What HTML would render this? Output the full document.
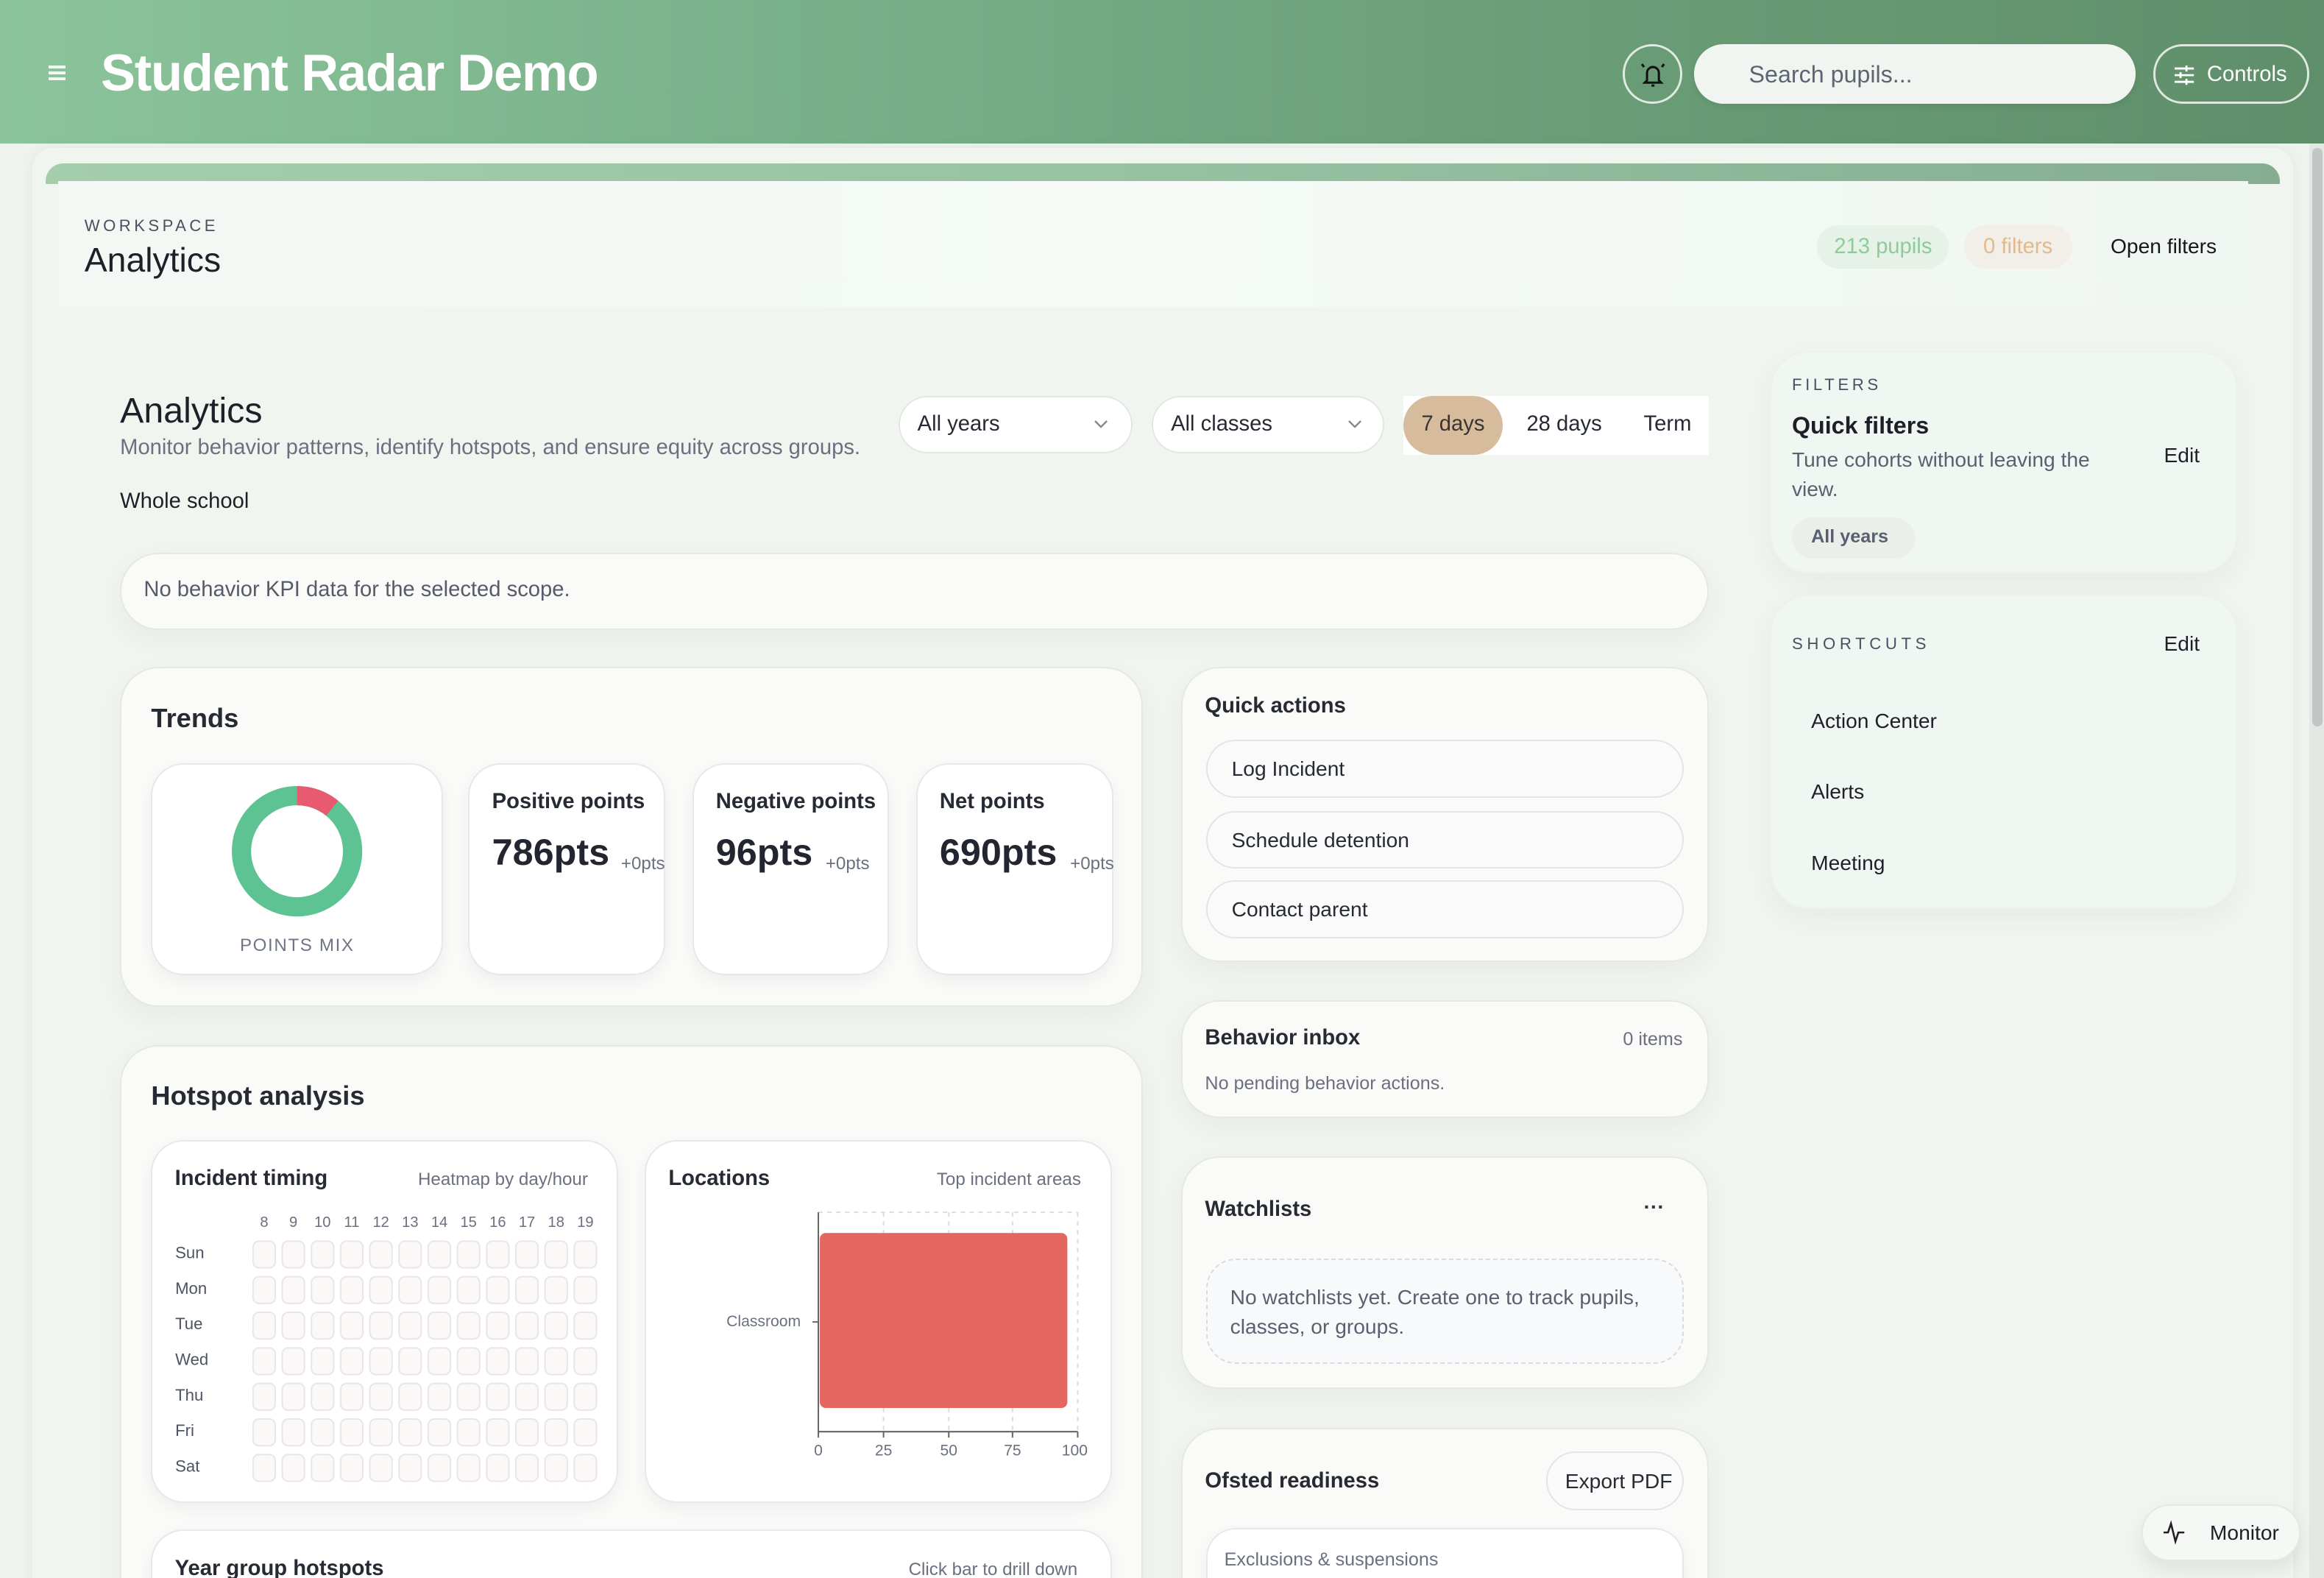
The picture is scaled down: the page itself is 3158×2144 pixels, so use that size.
<!DOCTYPE html>
<html><head><meta charset="utf-8"><style>
*{box-sizing:border-box;margin:0;padding:0}
html,body{width:3158px;height:2144px;overflow:hidden;background:#eef3ee}
#z{zoom:2.01403;width:1568px;height:1065px;position:relative;overflow:hidden;font-family:"Liberation Sans",sans-serif;color:#1f2330;background:linear-gradient(180deg,#eef3ee,#eff3ee)}
.a{position:absolute}
.card{position:absolute;background:#fafaf9;border:1px solid #e6e8e5;border-radius:26px;box-shadow:0 6px 18px rgba(40,60,40,.05)}
.sub{position:absolute;background:#fff;border:1px solid #e7e8e8;border-radius:22px;box-shadow:0 4px 12px rgba(0,0,0,.05)}
.btn{position:absolute;background:#fafafa;border:1px solid #e3e4e4;border-radius:20px;font-size:14px;padding-left:16px;line-height:37px;color:#262a33}
.t18{font-size:18px;font-weight:bold;color:#262a33}
.t14b{font-size:14.5px;font-weight:bold;color:#262a33}
.g{color:#6b7080}
</style></head><body><div id="z">
<div class="a" style="left:0;top:0;width:1568px;height:97px;background:linear-gradient(90deg,#8bc49a 0%,#78b189 35%,#6b9f78 65%,#5f8f6a 100%)"></div>
<div class="a" style="left:33px;top:44px;width:11px;height:2px;background:#fff;box-shadow:0 4px 0 #fff,0 8px 0 #fff;opacity:.9"></div>
<div class="a" style="left:68px;top:29px;font-size:35px;font-weight:bold;color:#fff;letter-spacing:-.6px">Student Radar Demo</div>
<div class="a" style="left:1095px;top:30px;width:40px;height:40px;border:1.5px solid rgba(255,255,255,.8);border-radius:50%"></div>
<svg class="a" style="left:1105px;top:40px" width="20" height="20" viewBox="0 0 20 20" fill="none" stroke="#111" stroke-width="1.5"><path d="M6 14V9a4 4 0 0 1 8 0v5l1.5 1.5h-11z"/><path d="M9 17.5h2"/><path d="M4 5l-1.5-2M16 5l1.5-2"/></svg>
<div class="a" style="left:1143px;top:30px;width:298px;height:40px;background:#f1f5f1;border-radius:20px;box-shadow:0 2px 4px rgba(0,0,0,.08)"></div>
<div class="a" style="left:1180px;top:41px;font-size:16px;color:#5e6472">Search pupils...</div>
<div class="a" style="left:1453px;top:30px;width:105px;height:40px;border:1.5px solid rgba(255,255,255,.8);border-radius:20px"></div>
<svg class="a" style="left:1466px;top:43px" width="15" height="15" viewBox="0 0 15 15" stroke="#fff" stroke-width="1.4"><path d="M1 3h13M1 7.5h13M1 12h13"/><path d="M9 1v4M5 5.5v4M9 10v4"/></svg>
<div class="a" style="left:1489px;top:42px;font-size:14.5px;color:#fff">Controls</div>
<div class="a" style="left:22px;top:100px;width:1525px;height:980px;background:#f1f5f0;border-radius:14px;box-shadow:0 0 10px rgba(0,0,0,.05)"></div>
<div class="a" style="left:31px;top:110px;width:1507px;height:14px;background:linear-gradient(90deg,#a4cdab,#97c2a2,#86ad90);border-radius:12px 12px 0 0"></div>
<div class="a" style="left:39px;top:122px;width:1478px;height:85px;background:linear-gradient(90deg,#f3f8f4,#f5faf6,#f0f6f1)"></div>
<div class="a" style="left:57px;top:146px;font-size:11px;letter-spacing:2.2px;color:#4a5060">WORKSPACE</div>
<div class="a" style="left:57px;top:162px;font-size:23px;color:#1d2029">Analytics</div>
<div class="a" style="left:1226px;top:152px;width:89px;height:29px;background:#e6f2e7;border-radius:15px;color:#8fcb9a;font-size:14.5px;line-height:29px;text-align:center">213 pupils</div>
<div class="a" style="left:1325px;top:152px;width:73px;height:29px;background:#f2efe8;border-radius:15px;color:#e2b98a;font-size:14.5px;line-height:29px;text-align:center">0 filters</div>
<div class="a" style="left:1424px;top:158px;font-size:14px;color:#15171c">Open filters</div>
<div class="a" style="left:81px;top:263px;font-size:24px;color:#1d2029">Analytics</div>
<div class="a g" style="left:81px;top:294px;font-size:14.5px">Monitor behavior patterns, identify hotspots, and ensure equity across groups.</div>
<div class="a" style="left:81px;top:330px;font-size:14.5px;color:#1d2029">Whole school</div>
<div class="a" style="left:606px;top:267px;width:158px;height:39px;background:#fff;border:1px solid #e4e6e4;border-radius:20px"></div>
<div class="a" style="left:619px;top:278px;font-size:14.5px;color:#262a33">All years</div>
<svg class="a" style="left:738px;top:282px" width="10" height="8" viewBox="0 0 10 8" fill="none" stroke="#888" stroke-width="1.2"><path d="M1 2l4 4 4-4"/></svg>
<div class="a" style="left:777px;top:267px;width:157px;height:39px;background:#fff;border:1px solid #e4e6e4;border-radius:20px"></div>
<div class="a" style="left:790px;top:278px;font-size:14.5px;color:#262a33">All classes</div>
<svg class="a" style="left:909px;top:282px" width="10" height="8" viewBox="0 0 10 8" fill="none" stroke="#888" stroke-width="1.2"><path d="M1 2l4 4 4-4"/></svg>
<div class="a" style="left:947px;top:267px;width:206px;height:40px;background:#fff"></div>
<div class="a" style="left:947px;top:267px;width:67px;height:40px;background:#d6bc9c;border-radius:20px"></div>
<div class="a" style="left:959px;top:278px;font-size:14.5px;color:#3a3530">7 days</div>
<div class="a" style="left:1030px;top:278px;font-size:14.5px;color:#262a33">28 days</div>
<div class="a" style="left:1109px;top:278px;font-size:14.5px;color:#262a33">Term</div>
<div class="card" style="left:81px;top:373px;width:1072px;height:52px;border-radius:26px"></div>
<div class="a g" style="left:97px;top:390px;font-size:14.5px;color:#555b68">No behavior KPI data for the selected scope.</div>
<div class="card" style="left:81px;top:450px;width:690px;height:229px"></div>
<div class="a t18" style="left:102px;top:474px">Trends</div>
<div class="sub" style="left:102px;top:515px;width:197px;height:143px"></div>
<svg class="a" style="left:156px;top:530px" width="89" height="89" viewBox="0 0 89 89"><circle cx="44.5" cy="44.5" r="37.5" fill="none" stroke="#5ec392" stroke-width="13"/><circle cx="44.5" cy="44.5" r="37.5" fill="none" stroke="#e85a70" stroke-width="13" stroke-dasharray="25.7 300" transform="rotate(-90 44.5 44.5)"/></svg>
<div class="a" style="left:102px;top:631px;width:197px;text-align:center;font-size:12px;letter-spacing:.8px;color:#6f7585">POINTS MIX</div>
<div class="sub" style="left:316px;top:515px;width:133px;height:143px"></div>
<div class="a t14b" style="left:332px;top:533px">Positive points</div>
<div class="a" style="left:332px;top:560px;font-size:25px;font-weight:bold;color:#232630">786pts</div>
<div class="a g" style="left:419px;top:576px;font-size:12px">+0pts</div>
<div class="sub" style="left:467px;top:515px;width:133px;height:143px"></div>
<div class="a t14b" style="left:483px;top:533px">Negative points</div>
<div class="a" style="left:483px;top:560px;font-size:25px;font-weight:bold;color:#232630">96pts</div>
<div class="a g" style="left:557px;top:576px;font-size:12px">+0pts</div>
<div class="sub" style="left:618px;top:515px;width:133px;height:143px"></div>
<div class="a t14b" style="left:634px;top:533px">Net points</div>
<div class="a" style="left:634px;top:560px;font-size:25px;font-weight:bold;color:#232630">690pts</div>
<div class="a g" style="left:722px;top:576px;font-size:12px">+0pts</div>
<div class="card" style="left:81px;top:705px;width:690px;height:400px"></div>
<div class="a t18" style="left:102px;top:729px">Hotspot analysis</div>
<div class="sub" style="left:102px;top:769px;width:315px;height:245px"></div>
<div class="a t14b" style="left:118px;top:787px">Incident timing</div>
<div class="a g" style="left:282px;top:789px;font-size:12px">Heatmap by day/hour</div>
<svg class="a" style="left:110px;top:815px" width="300" height="190" font-family="Liberation Sans" font-size="10" fill="#6b7080">
<defs><pattern id="hp" x="60" y="22" width="19.7" height="24" patternUnits="userSpaceOnUse"><rect x=".5" y=".5" width="15" height="18" rx="4" fill="#fbf8f7" stroke="#e8e6e6"/></pattern></defs>
<rect x="60" y="22" width="236.4" height="168" fill="url(#hp)"/>
<g text-anchor="middle"><text x="68" y="13">8</text><text x="87.7" y="13">9</text><text x="107.4" y="13">10</text><text x="127.1" y="13">11</text><text x="146.8" y="13">12</text><text x="166.5" y="13">13</text><text x="186.2" y="13">14</text><text x="205.9" y="13">15</text><text x="225.6" y="13">16</text><text x="245.3" y="13">17</text><text x="265" y="13">18</text><text x="284.7" y="13">19</text></g>
<g font-size="11" fill="#4e5362"><text x="8" y="34">Sun</text><text x="8" y="58">Mon</text><text x="8" y="82">Tue</text><text x="8" y="106">Wed</text><text x="8" y="130">Thu</text><text x="8" y="154">Fri</text><text x="8" y="178">Sat</text></g>
</svg>
<div class="sub" style="left:435px;top:769px;width:315px;height:245px"></div>
<div class="a t14b" style="left:451px;top:787px">Locations</div>
<div class="a g" style="left:632px;top:789px;font-size:12px">Top incident areas</div>
<svg class="a" style="left:480px;top:810px" width="265" height="180" font-family="Liberation Sans" font-size="10.5" fill="#6b7080">
<g stroke="#ddd" stroke-dasharray="3 3"><path d="M72 8H247M116 8V156M160 8V156M203 8V156M247 8V156"/></g>
<rect x="73" y="22" width="167" height="118" rx="4" fill="#e3665f"/>
<path d="M72 8V156H247M116 156v4M160 156v4M203 156v4M247 156v4M72 156v4M68 82h4" stroke="#666" fill="none"/>
<text x="10" y="85">Classroom</text>
<g text-anchor="middle"><text x="72" y="172">0</text><text x="116" y="172">25</text><text x="160" y="172">50</text><text x="203" y="172">75</text><text x="245" y="172">100</text></g>
</svg>
<div class="sub" style="left:102px;top:1032px;width:648px;height:80px"></div>
<div class="a t14b" style="left:118px;top:1050px">Year group hotspots</div>
<div class="a g" style="left:613px;top:1052px;font-size:12px">Click bar to drill down</div>
<div class="card" style="left:797px;top:450px;width:356px;height:199px"></div>
<div class="a t14b" style="left:813px;top:468px">Quick actions</div>
<div class="btn" style="left:814px;top:499px;width:322px;height:39px">Log Incident</div>
<div class="btn" style="left:814px;top:547px;width:322px;height:39px">Schedule detention</div>
<div class="btn" style="left:814px;top:594px;width:322px;height:39px">Contact parent</div>
<div class="card" style="left:797px;top:675px;width:356px;height:79px"></div>
<div class="a t14b" style="left:813px;top:692px">Behavior inbox</div>
<div class="a g" style="left:1095px;top:694px;font-size:12.5px">0 items</div>
<div class="a g" style="left:813px;top:724px;font-size:12.5px">No pending behavior actions.</div>
<div class="card" style="left:797px;top:780px;width:356px;height:157px"></div>
<div class="a t14b" style="left:813px;top:808px">Watchlists</div>
<div class="a" style="left:1109px;top:806px;font-size:14px;font-weight:bold;color:#333">···</div>
<div class="a" style="left:814px;top:849px;width:322px;height:71px;border:1px dashed #d9dbe0;border-radius:20px;background:#f8f9fb"></div>
<div class="a" style="left:830px;top:865px;width:300px;font-size:14px;line-height:20px;color:#5a6070">No watchlists yet. Create one to track pupils, classes, or groups.</div>
<div class="card" style="left:797px;top:963px;width:356px;height:140px"></div>
<div class="a t14b" style="left:813px;top:991px">Ofsted readiness</div>
<div class="btn" style="left:1043px;top:979px;width:93px;height:40px;padding-left:12px;line-height:38px">Export PDF</div>
<div class="sub" style="left:814px;top:1031px;width:322px;height:60px;border-radius:20px"></div>
<div class="a g" style="left:826px;top:1045px;font-size:12.5px">Exclusions &amp; suspensions</div>
<div class="card" style="left:1194px;top:237px;width:316px;height:150px;background:#f0f6f2;border-color:#edf1ed"></div>
<div class="a" style="left:1209px;top:253px;font-size:11px;letter-spacing:2.3px;color:#4a5060">FILTERS</div>
<div class="a" style="left:1209px;top:278px;font-size:16px;font-weight:bold;color:#1d2029">Quick filters</div>
<div class="a" style="left:1209px;top:300px;width:230px;font-size:14px;line-height:20px;color:#5a6070">Tune cohorts without leaving the view.</div>
<div class="a" style="left:1460px;top:299px;font-size:14px;color:#1d2029">Edit</div>
<div class="a" style="left:1209px;top:349px;width:83px;height:28px;background:#eaefea;border-radius:14px"></div>
<div class="a" style="left:1222px;top:355px;font-size:12.5px;font-weight:bold;color:#5a6070">All years</div>
<div class="card" style="left:1194px;top:401px;width:316px;height:212px;background:#f0f6f2;border-color:#edf1ed"></div>
<div class="a" style="left:1209px;top:428px;font-size:11px;letter-spacing:2.8px;color:#4a5060">SHORTCUTS</div>
<div class="a" style="left:1460px;top:426px;font-size:14px;color:#1d2029">Edit</div>
<div class="a" style="left:1222px;top:478px;font-size:14px;color:#1d2029">Action Center</div>
<div class="a" style="left:1222px;top:526px;font-size:14px;color:#1d2029">Alerts</div>
<div class="a" style="left:1222px;top:574px;font-size:14px;color:#1d2029">Meeting</div>
<div class="a" style="left:1558px;top:97px;width:10px;height:968px;background:#e3e8e4"></div>
<div class="a" style="left:1560px;top:100px;width:7px;height:390px;background:#c3c6c4;border-radius:4px"></div>
<div class="a" style="left:1445px;top:1015px;width:107px;height:38px;background:#f6f8f6;border:1px solid #e5e8e5;border-radius:19px;box-shadow:0 6px 14px rgba(0,0,0,.08)"></div>
<svg class="a" style="left:1459px;top:1025px" width="17" height="17" viewBox="0 0 17 17" fill="none" stroke="#222" stroke-width="1.3"><path d="M1 9h3l2-6 3 12 2-6h4"/></svg>
<div class="a" style="left:1491px;top:1026px;font-size:14px;color:#1d2029">Monitor</div>
</div></body></html>
